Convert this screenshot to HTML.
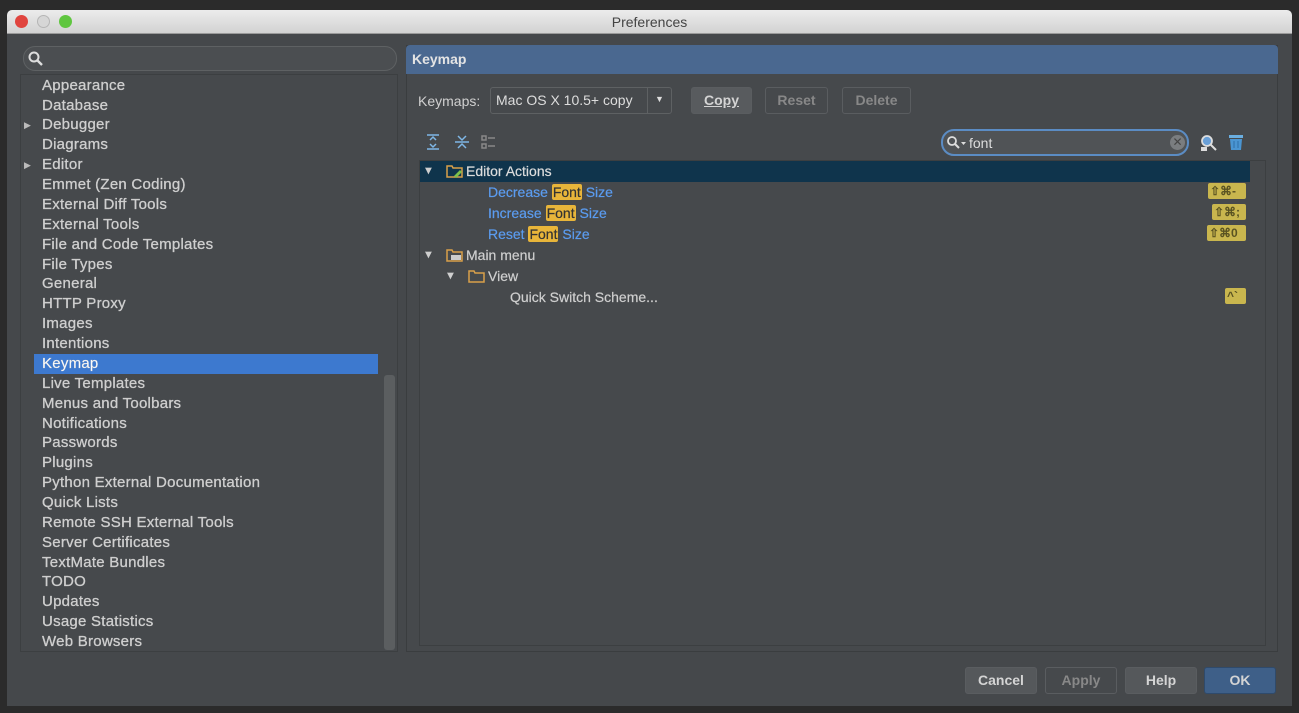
<!DOCTYPE html>
<html><head><meta charset="utf-8"><style>
*{margin:0;padding:0;box-sizing:border-box}
body{width:1299px;height:713px;background:#2b2b2b;font-family:"Liberation Sans",sans-serif;font-size:14px;color:#c8c8c8;position:relative;overflow:hidden}
.abs{position:absolute}
.win{left:7px;top:10px;width:1285px;height:696px;background:#45484b;border-radius:5px 5px 0 0}
.title{left:7px;top:10px;width:1285px;height:24px;background:linear-gradient(#ececec,#d2d2d2);border-radius:5px 5px 0 0;border-bottom:1px solid #9a9a9a;text-align:center;color:#444;font-size:14px;line-height:24px}
.dot{width:13px;height:13px;border-radius:50%;top:15px}
.item{position:absolute;left:42px;height:20px;line-height:20px;font-size:15px;letter-spacing:0.25px;color:#cfcfcf;-webkit-text-stroke:0.3px #cfcfcf}
.arrow{position:absolute;left:24px;font-size:9px;color:#bbb}
.btn{position:absolute;top:667px;height:27px;border:1px solid #5a5d60;border-radius:3px;background:#55585b;text-align:center;line-height:25px;color:#d4d4d4;font-weight:bold;font-size:14px}
.tr{position:absolute;height:21px;line-height:21px;font-size:14px;color:#cfcfcf;-webkit-text-stroke:0.2px currentColor}
.blue{color:#5b9cf0}
.hl{background:#e8b53a;color:#333;border-radius:2px;padding:0 1px}
.kb{position:absolute;background:#c9b64e;color:#5a5322;font-size:12px;font-weight:bold;height:16px;line-height:16px;padding:0 2px;border-radius:2px}
</style></head><body>
<div class="abs win"></div>
<div class="abs title">Preferences</div>
<div class="abs dot" style="left:15px;background:#e0443e"></div>
<div class="abs dot" style="left:37px;background:#d6d6d6;border:1px solid #b5b5b5"></div>
<div class="abs dot" style="left:59px;background:#5fc63f"></div>

<div class="abs" style="left:23px;top:46px;width:374px;height:25px;border:1px solid #5e6163;border-radius:12px;background:#4b4e51"></div>
<svg class="abs" style="left:28px;top:51px" width="16" height="16"><circle cx="6" cy="6" r="4.5" stroke="#ddd" stroke-width="2" fill="none"/><line x1="9.5" y1="9.5" x2="14" y2="14" stroke="#ddd" stroke-width="2.4"/></svg>
<div class="abs" style="left:20px;top:74px;width:378px;height:578px;border:1px solid #3c3f41;background:#46494c"></div>
<div class="abs" style="left:34px;top:354px;width:344px;height:20px;background:#3d79cf"></div>
<div class="abs" style="left:384px;top:375px;width:11px;height:275px;background:#5b5e60;border-radius:3px"></div>
<div class="item" style="top:76px">Appearance</div>
<div class="item" style="top:96px">Database</div>
<div class="arrow" style="top:120px">▶</div><div class="item" style="top:115px">Debugger</div>
<div class="item" style="top:135px">Diagrams</div>
<div class="arrow" style="top:160px">▶</div><div class="item" style="top:155px">Editor</div>
<div class="item" style="top:175px">Emmet (Zen Coding)</div>
<div class="item" style="top:195px">External Diff Tools</div>
<div class="item" style="top:215px">External Tools</div>
<div class="item" style="top:235px">File and Code Templates</div>
<div class="item" style="top:255px">File Types</div>
<div class="item" style="top:274px">General</div>
<div class="item" style="top:294px">HTTP Proxy</div>
<div class="item" style="top:314px">Images</div>
<div class="item" style="top:334px">Intentions</div>
<div class="item" style="top:354px;color:#fff">Keymap</div>
<div class="item" style="top:374px">Live Templates</div>
<div class="item" style="top:394px">Menus and Toolbars</div>
<div class="item" style="top:414px">Notifications</div>
<div class="item" style="top:433px">Passwords</div>
<div class="item" style="top:453px">Plugins</div>
<div class="item" style="top:473px">Python External Documentation</div>
<div class="item" style="top:493px">Quick Lists</div>
<div class="item" style="top:513px">Remote SSH External Tools</div>
<div class="item" style="top:533px">Server Certificates</div>
<div class="item" style="top:553px">TextMate Bundles</div>
<div class="item" style="top:572px">TODO</div>
<div class="item" style="top:592px">Updates</div>
<div class="item" style="top:612px">Usage Statistics</div>
<div class="item" style="top:632px">Web Browsers</div>

<div class="abs" style="left:406px;top:45px;width:872px;height:607px;border:1px solid #3a3d3f;background:#46494c"></div>
<div class="abs" style="left:406px;top:45px;width:872px;height:29px;background:#4a6890;border-radius:4px 4px 0 0;color:#e4e4e4;font-weight:bold;line-height:29px;padding-left:6px;font-size:14px">Keymap</div>
<div class="abs" style="left:418px;top:92px;line-height:18px;font-size:14px;color:#d0d0d0">Keymaps:</div>
<div class="abs" style="left:490px;top:87px;width:182px;height:27px;border:1px solid #5e6163;border-radius:3px;background:#46494c;line-height:25px;padding-left:5px;color:#ddd;font-size:14px">Mac OS X 10.5+ copy</div>
<div class="abs" style="left:647px;top:88px;width:1px;height:25px;background:#5e6163"></div>
<div class="abs" style="left:655px;top:94px;font-size:9px;color:#ddd">▼</div>
<div class="btn" style="left:691px;top:87px;width:61px;background:#585b5e;text-decoration:underline">Copy</div>
<div class="btn" style="left:765px;top:87px;width:63px;background:#46494c;color:#888">Reset</div>
<div class="btn" style="left:842px;top:87px;width:69px;background:#46494c;color:#888">Delete</div>
<svg class="abs" style="left:425px;top:133px" width="80" height="18"><g stroke="#7fb7e6" stroke-width="1.5" fill="none"><line x1="2" y1="2" x2="14" y2="2"/><line x1="2" y1="16" x2="14" y2="16"/><path d="M5 7l3-3 3 3M5 11l3 3 3-3"/><line x1="30" y1="9" x2="44" y2="9"/><path d="M33 3l4 4 4-4M33 15l4-4 4 4"/></g><g stroke="#888" stroke-width="1.5" fill="none"><rect x="57" y="3" width="4" height="4"/><rect x="57" y="11" width="4" height="4"/><line x1="63" y1="5" x2="70" y2="5"/><line x1="63" y1="13" x2="70" y2="13"/></g></svg>
<div class="abs" style="left:941px;top:129px;width:248px;height:27px;border:2px solid #5b8cc4;border-radius:13px;background:#505356"></div>
<svg class="abs" style="left:946px;top:135px" width="22" height="16"><circle cx="6" cy="6" r="4" stroke="#ddd" stroke-width="1.8" fill="none"/><line x1="9" y1="9" x2="13" y2="13" stroke="#ddd" stroke-width="2"/><path d="M15 7h5l-2.5 3z" fill="#ddd"/></svg>
<div class="abs" style="left:969px;top:134px;color:#ddd;font-size:14px;line-height:18px">font</div>
<div class="abs" style="left:1170px;top:135px;width:15px;height:15px;border-radius:50%;background:#7a7d80;color:#444;font-size:12px;line-height:15px;text-align:center">✕</div>
<svg class="abs" style="left:1198px;top:133px" width="20" height="20"><circle cx="9" cy="8" r="5" stroke="#ddd" stroke-width="1.8" fill="#6aa0d8"/><line x1="13" y1="12" x2="18" y2="17" stroke="#ddd" stroke-width="2"/><rect x="3" y="14" width="6" height="4" fill="#ddd"/></svg>
<svg class="abs" style="left:1228px;top:133px" width="16" height="18"><rect x="1" y="2" width="14" height="3" fill="#6aaee0"/><path d="M2 6h12l-1 11H3z" fill="#4a95d2"/><g stroke="#2f6fa8" stroke-width="1"><line x1="6" y1="8" x2="6" y2="15"/><line x1="10" y1="8" x2="10" y2="15"/></g></svg>
<div class="abs" style="left:419px;top:160px;width:847px;height:486px;border:1px solid #3c3f41;background:#46494c"></div>
<div class="abs" style="left:420px;top:161px;width:830px;height:21px;background:#0f344c"></div>
<div class="tr" style="left:423px;top:161px;font-size:11px">▼</div>
<svg class="abs" style="left:446px;top:164px" width="18" height="14"><path d="M1 2h5l1 2h9v9H1z" fill="none" stroke="#d9a04a" stroke-width="1.5"/><path d="M8 12l6-6 2 2-6 6z" fill="#7cc04a"/></svg>
<div class="tr" style="left:466px;top:161px;color:#ddd">Editor Actions</div>
<div class="tr blue" style="left:488px;top:182px">Decrease <span class="hl">Font</span> Size</div>
<div class="tr blue" style="left:488px;top:203px">Increase <span class="hl">Font</span> Size</div>
<div class="tr blue" style="left:488px;top:224px">Reset <span class="hl">Font</span> Size</div>
<div class="tr" style="left:423px;top:245px;font-size:11px">▼</div>
<svg class="abs" style="left:446px;top:248px" width="18" height="14"><path d="M1 2h5l1 2h9v9H1z" fill="none" stroke="#d9a04a" stroke-width="1.5"/><rect x="5" y="7" width="10" height="5" fill="#ccc"/></svg>
<div class="tr" style="left:466px;top:245px">Main menu</div>
<div class="tr" style="left:445px;top:266px;font-size:11px">▼</div>
<svg class="abs" style="left:468px;top:269px" width="18" height="14"><path d="M1 2h5l1 2h9v9H1z" fill="none" stroke="#d9a04a" stroke-width="1.5"/></svg>
<div class="tr" style="left:488px;top:266px">View</div>
<div class="tr" style="left:510px;top:287px">Quick Switch Scheme...</div>
<div class="kb" style="left:1208px;top:183px;width:38px">⇧⌘-</div>
<div class="kb" style="left:1212px;top:204px;width:34px">⇧⌘;</div>
<div class="kb" style="left:1207px;top:225px;width:39px">⇧⌘0</div>
<div class="kb" style="left:1225px;top:288px;width:21px">^`</div>
<div class="btn" style="left:965px;width:72px">Cancel</div>
<div class="btn" style="left:1045px;width:72px;background:#46494c;color:#888">Apply</div>
<div class="btn" style="left:1125px;width:72px">Help</div>
<div class="btn" style="left:1204px;width:72px;background:#3e5f88;border-color:#2f4a6b">OK</div>
</body></html>
